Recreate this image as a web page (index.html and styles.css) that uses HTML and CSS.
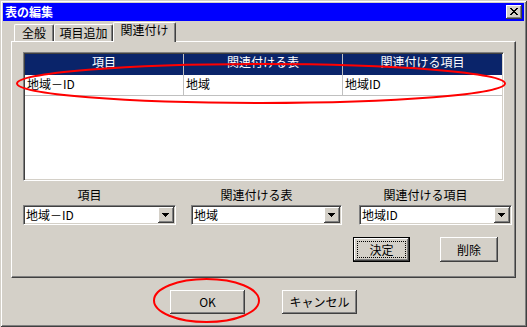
FILE: index.html
```html
<!DOCTYPE html>
<html lang="ja">
<head>
<meta charset="utf-8">
<title>表の編集</title>
<link rel="stylesheet" href="styles.css">
</head>
<body>
<div class="window">
  <div class="titlebar">
    <span class="title">表の編集</span>
    <span class="close-btn">
      <svg width="8" height="7" viewBox="0 0 8 7" shape-rendering="crispEdges">
        <rect x="0" y="0" width="2" height="1"/><rect x="6" y="0" width="2" height="1"/>
        <rect x="1" y="1" width="2" height="1"/><rect x="5" y="1" width="2" height="1"/>
        <rect x="2" y="2" width="4" height="1"/>
        <rect x="3" y="3" width="2" height="1"/>
        <rect x="2" y="4" width="4" height="1"/>
        <rect x="1" y="5" width="2" height="1"/><rect x="5" y="5" width="2" height="1"/>
        <rect x="0" y="6" width="2" height="1"/><rect x="6" y="6" width="2" height="1"/>
      </svg>
    </span>
  </div>
  <div class="content">
    <div class="tabs">
      <div class="tab t1">全般</div>
      <div class="tab t2">項目追加</div>
      <div class="tab active">関連付け</div>
    </div>
    <div class="panel">
      <div class="list">
        <div class="list-head">
          <div class="hcell">項目</div>
          <div class="hcell">関連付ける表</div>
          <div class="hcell last">関連付ける項目</div>
        </div>
        <div class="list-row">
          <div class="cell">地域－ID</div>
          <div class="cell">地域</div>
          <div class="cell last">地域ID</div>
        </div>
      </div>
      <div class="fields">
        <div class="field f1">
          <div class="label">項目</div>
          <div class="combo">
            <span class="combo-text">地域－ID</span>
            <span class="drop"><svg width="7" height="4" viewBox="0 0 7 4" shape-rendering="crispEdges"><rect x="0" y="0" width="7" height="1"/><rect x="1" y="1" width="5" height="1"/><rect x="2" y="2" width="3" height="1"/><rect x="3" y="3" width="1" height="1"/></svg></span>
          </div>
        </div>
        <div class="field f2">
          <div class="label">関連付ける表</div>
          <div class="combo">
            <span class="combo-text">地域</span>
            <span class="drop"><svg width="7" height="4" viewBox="0 0 7 4" shape-rendering="crispEdges"><rect x="0" y="0" width="7" height="1"/><rect x="1" y="1" width="5" height="1"/><rect x="2" y="2" width="3" height="1"/><rect x="3" y="3" width="1" height="1"/></svg></span>
          </div>
        </div>
        <div class="field f3">
          <div class="label">関連付ける項目</div>
          <div class="combo">
            <span class="combo-text">地域ID</span>
            <span class="drop"><svg width="7" height="4" viewBox="0 0 7 4" shape-rendering="crispEdges"><rect x="0" y="0" width="7" height="1"/><rect x="1" y="1" width="5" height="1"/><rect x="2" y="2" width="3" height="1"/><rect x="3" y="3" width="1" height="1"/></svg></span>
          </div>
        </div>
      </div>
      <div class="actions">
        <button class="btn small default">決定</button>
        <button class="btn small del">削除</button>
      </div>
    </div>
    <div class="footer">
      <button class="btn wide">OK</button>
      <button class="btn wide">キャンセル</button>
    </div>
  </div>
  <svg class="annot" width="527" height="327" viewBox="0 0 527 327">
    <ellipse cx="261" cy="83.5" rx="244" ry="19.5" fill="none" stroke="#ff0000" stroke-width="2"/>
    <ellipse cx="206.5" cy="300.5" rx="52.5" ry="21.5" fill="none" stroke="#ff0000" stroke-width="2"/>
  </svg>
</div>
</body>
</html>
```
FILE: styles.css
```css
* { box-sizing: border-box; }
html, body { margin: 0; padding: 0; background: #d4d0c8; }
body {
  font-family: "Noto Sans CJK JP", "Noto Sans", sans-serif;
  font-size: 12px;
  color: #000;
}
.window {
  position: relative;
  width: 527px;
  height: 327px;
  padding: 3px;
  background: #d4d0c8;
  box-shadow: inset 1px 1px #d4d0c8, inset -1px -1px #404040, inset 2px 2px #fff, inset -2px -2px #808080;
  display: flex;
  flex-direction: column;
}
.titlebar {
  height: 18px;
  background: #0000ff;
  display: flex;
  align-items: center;
  padding: 0 2px;
}
.title {
  color: #fff;
  font-weight: bold;
  font-size: 12px;
  line-height: 16px;
}
.close-btn {
  margin-left: auto;
  width: 16px;
  height: 14px;
  background: #d4d0c8;
  box-shadow: inset -1px -1px #404040, inset 1px 1px #fff, inset -2px -2px #808080;
  display: flex;
  align-items: center;
  justify-content: center;
  padding-bottom: 1px;
}
.close-btn svg { fill: #000; display: block; }
.content {
  flex: 1;
  display: flex;
  flex-direction: column;
  padding: 1px 8px 0 8px;
}
.tabs {
  display: flex;
  align-items: flex-end;
  height: 19px;
  padding-left: 3px;
}
.tab {
  height: 17px;
  border-top: 1px solid #fff;
  border-left: 1px solid #fff;
  border-right: 1px solid #404040;
  box-shadow: inset -1px 0 #808080;
  border-radius: 2px 2px 0 0;
  text-align: center;
  line-height: 14px;
  padding-top: 1px;
  background: #d4d0c8;
}
.t1 { width: 40px; }
.t2 { width: 59px; }
.tab.active {
  width: 63px;
  height: 20px;
  margin-bottom: -1px;
  position: relative;
  z-index: 1;
  line-height: 14px;
  padding-top: 0;
}
.panel {
  height: 237px;
  border-top: 1px solid #fff;
  border-left: 1px solid #fff;
  border-right: 1px solid #404040;
  border-bottom: 1px solid #404040;
  box-shadow: inset -1px -1px #808080;
  padding: 10px 0 0 11px;
}
.list {
  width: 481px;
  height: 129px;
  background: #fff;
  border: 1px solid;
  border-color: #808080 #fff #fff #808080;
  box-shadow: inset 1px 1px #404040, inset -1px -1px #d4d0c8;
  padding: 1px;
}
.list-head, .list-row {
  display: grid;
  grid-template-columns: 159px 159px 159px;
}
.list-head { background: #0a246a; height: 21px; }
.hcell {
  color: #fff;
  text-align: center;
  line-height: 16px;
  border-right: 1px solid #c0c0c0;
}
.hcell.last, .cell.last { border-right: 0; }
.list-row { height: 21px; border-bottom: 1px solid #c0c0c0; }
.cell {
  line-height: 16px;
  padding: 1px 0 0 2px;
  border-right: 1px solid #c0c0c0;
  white-space: nowrap;
}
.fields {
  display: flex;
  margin-top: 6px;
}
.field { display: flex; flex-direction: column; }
.f1 { width: 153px; }
.f2 { width: 151px; margin-left: 15px; }
.f3 { width: 153px; margin-left: 17px; }
.label {
  height: 16px;
  line-height: 16px;
  text-align: center;
  padding-right: 20px;
  margin-bottom: 2px;
  white-space: nowrap;
}
.combo {
  height: 20px;
  background: #fff;
  border: 1px solid;
  border-color: #808080 #fff #fff #808080;
  box-shadow: inset 1px 1px #404040, inset -1px -1px #d4d0c8;
  padding: 1px;
  display: flex;
}
.combo-text {
  flex: 1;
  line-height: 16px;
  padding-left: 1px;
  white-space: nowrap;
}
.drop {
  width: 16px;
  height: 16px;
  background: #d4d0c8;
  box-shadow: inset -1px -1px #404040, inset 1px 1px #fff, inset -2px -2px #808080;
  display: flex;
  align-items: center;
  justify-content: center;
  padding: 0 1px 1px 0;
}
.drop svg { fill: #000; display: block; }
.actions {
  display: flex;
  justify-content: flex-end;
  gap: 30px;
  margin-top: 12px;
  padding-right: 17px;
}
.btn {
  font-family: "Noto Sans CJK JP", "Noto Sans", sans-serif;
  font-size: 12px;
  color: #000;
  background: #d4d0c8;
  border: 0;
  padding: 0;
  margin: 0;
  box-shadow: inset -1px -1px #404040, inset 1px 1px #fff, inset -2px -2px #808080;
  line-height: 16px;
}
.small { width: 57px; height: 25px; }
.del { width: 58px; }
.btn.default {
  border: 1px solid #000;
  outline: 1px dotted #000;
  outline-offset: -5px;
}
.footer {
  display: flex;
  justify-content: center;
  gap: 37px;
  margin-top: 12px;
}
.wide { width: 75px; height: 24px; }
.annot {
  position: absolute;
  left: 0;
  top: 0;
  pointer-events: none;
}
```
